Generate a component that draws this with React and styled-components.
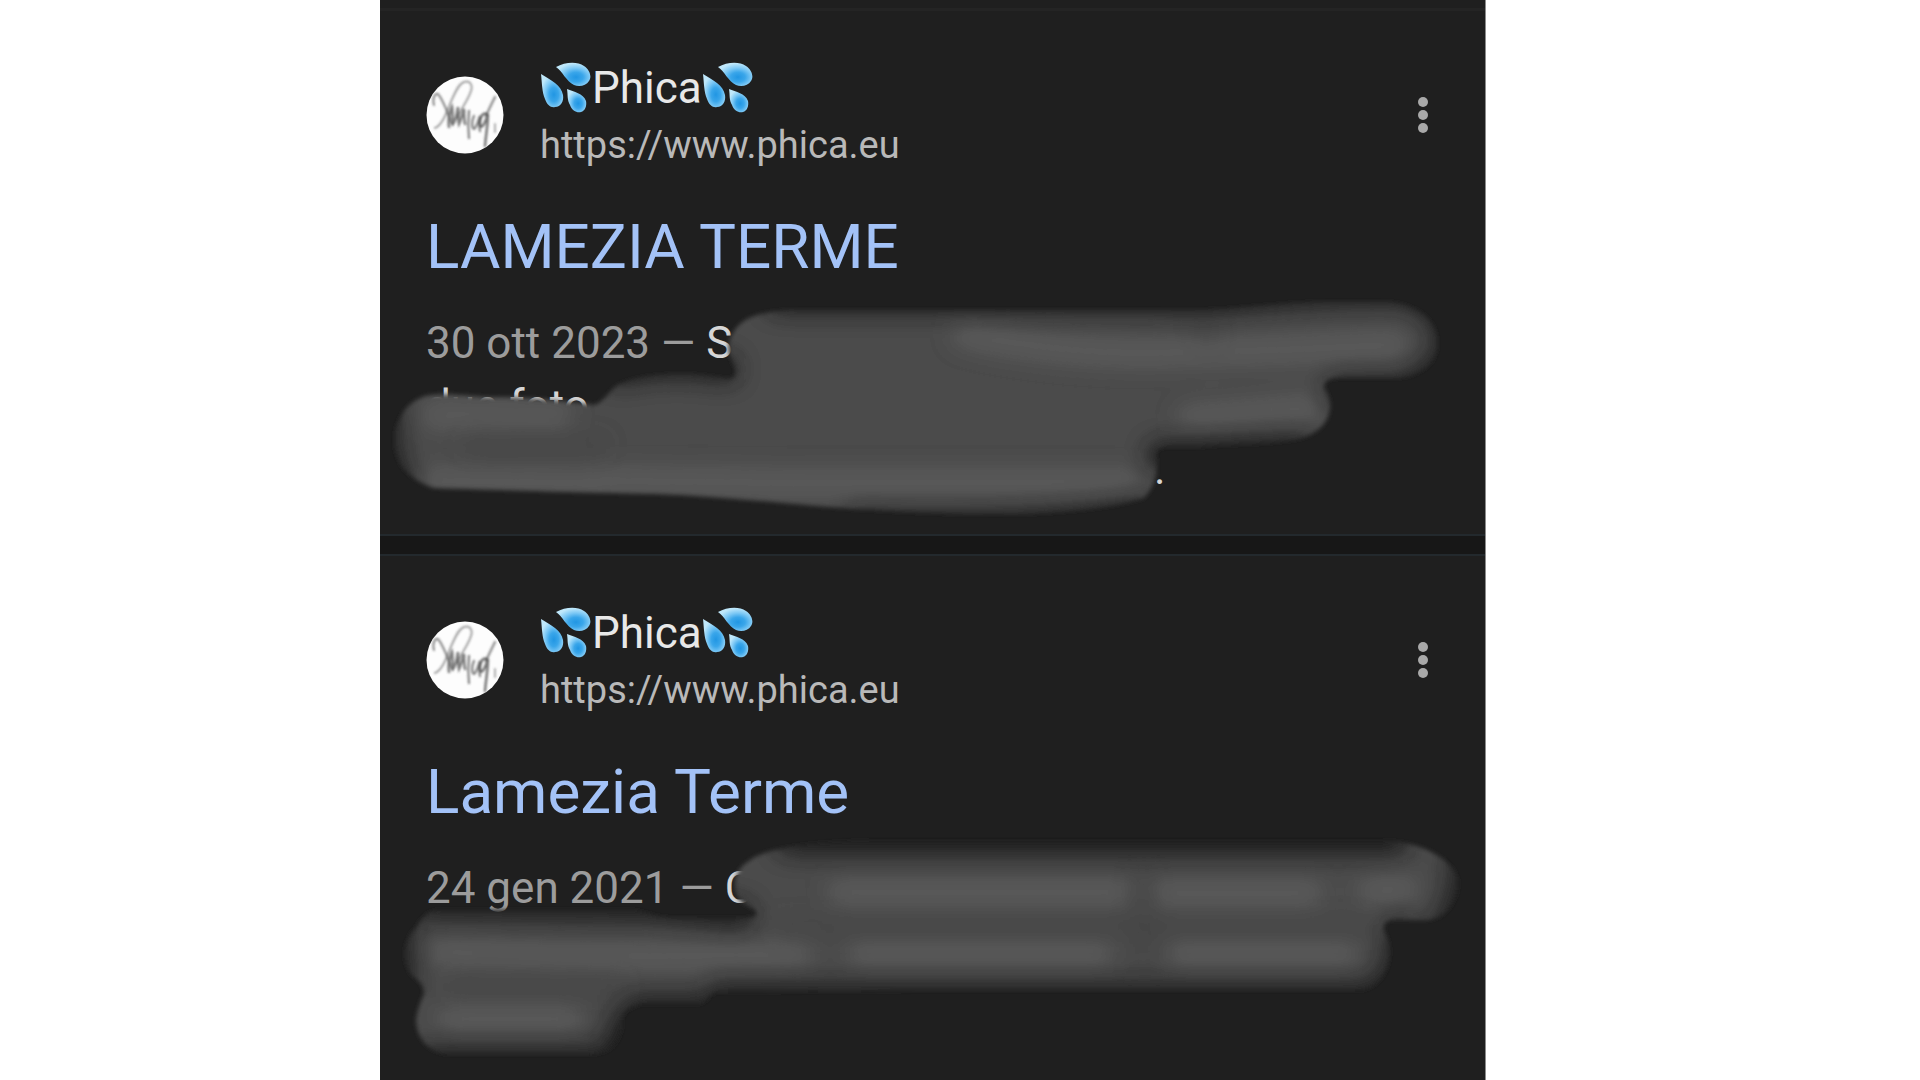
import React from "react";
import styled, { createGlobalStyle } from "styled-components";

const GlobalStyle = createGlobalStyle`
  * {
    box-sizing: border-box;
  }
  body {
    margin: 0;
    background: #ffffff;
    font-family: Roboto, "Liberation Sans", sans-serif;
  }
`;

const Page = styled.div`
  display: grid;
  grid-template-columns: 380fr 1106fr 434fr;
  min-height: 100vh;
`;

const Column = styled.main`
  grid-column: 2;
  background: #1f1f1f;
  border-right: 1px solid #8c8c8c;
`;

const TopEdge = styled.div`
  height: 11px;
  border-bottom: 3px solid #242424;
`;

const Divider = styled.div`
  height: 22px;
  background: #171717;
  border-top: 2px solid #23292d;
  border-bottom: 2px solid #23292d;
`;

const Card = styled.article`
  position: relative;
  height: 523px;
  padding: 45px 40px 0 46px;
`;

const Header = styled.header`
  display: flex;
  align-items: center;
  height: 118px;
`;

const AvatarIcon = styled.svg`
  width: 78px;
  height: 78px;
  flex: none;
`;

const Source = styled.div`
  flex: 1;
  margin-left: 36px;
  padding-top: 2px;
`;

const SiteName = styled.div`
  display: flex;
  align-items: center;
  height: 58px;
  font-size: 44px;
  line-height: 56px;
  color: #e8e8e8;
`;

const SiteUrl = styled.cite`
  display: block;
  font-size: 38px;
  font-style: normal;
  line-height: 56px;
  color: #b9b9b9;
`;

const DropsIcon = styled.svg`
  width: 52px;
  height: 52px;
  flex: none;
`;

const MenuButton = styled.button`
  display: flex;
  align-items: center;
  justify-content: center;
  width: 44px;
  height: 60px;
  padding: 0;
  border: 0;
  background: none;
  color: #a9a9a9;
`;

const Title = styled.h3`
  margin: 33px 0 0;
  font-size: 62px;
  font-weight: 400;
  line-height: 80px;
`;

const TitleLink = styled.a`
  color: #a3c2f7;
  text-decoration: none;
`;

const Snippet = styled.p`
  margin: 25px 0 0;
  font-size: 44px;
  line-height: 63px;
  white-space: nowrap;
  color: #d6d6d6;
`;

const DateText = styled.span`
  color: #9c9c9c;
`;

const Hidden = styled.span`
  display: inline-block;
  width: ${(props) => props.$width}px;
`;

const SmudgeLayer = styled.svg`
  position: absolute;
  top: 0;
  left: 0;
  width: 1105px;
  height: 523px;
  pointer-events: none;
`;

const Avatar = () => (
  <AvatarIcon viewBox="0 0 78 78" aria-hidden="true">
    <defs>
      <filter id="ink">
        <feGaussianBlur stdDeviation="1.2" />
      </filter>
    </defs>
    <circle cx="39" cy="39" r="38.5" fill="#fdfdfd" />
    <g fill="none" stroke="#4a4a4a" strokeLinecap="round" filter="url(#ink)">
      <path d="M8 29c-2-7 1-12 4-11 6 7 9 18 14 30" strokeWidth="2.2" opacity=".6" />
      <path d="M9 52c7-3 11-14 15-24 4-9 8-20 14-22 6-2 9 3 7 9-3 9-9 16-13 26" strokeWidth="2" opacity=".5" />
      <path d="M23 51c-1-7 0-14 3-20 1 5 0 12 1 17 3-4 4-10 5-17 0 7 0 12 1 17 2-4 3-9 5-15 0 6 0 11 1 15" strokeWidth="2.6" opacity=".7" />
      <path d="M43 35c-1 9-1 18 0 27M48 40c-3 6-2 12 0 13 3-2 4-8 6-13 0 7-1 11 0 15" strokeWidth="2.3" opacity=".65" />
      <path d="M61 38c-5-2-8 5-7 12 3 3 6-6 8-12 0 10-2 20-3 32" strokeWidth="2.5" opacity=".75" />
      <path d="M60 40c3-7 6-13 9-19" strokeWidth="2.4" opacity=".6" />
      <path d="M69 48v8" strokeWidth="2" opacity=".45" />
    </g>
  </AvatarIcon>
);

const Drops = () => (
  <DropsIcon viewBox="0 0 52 52" role="img" aria-label="sweat droplets">
    <defs>
      <radialGradient id="drop" cx="58%" cy="62%" r="60%">
        <stop offset="0" stopColor="#2196e3" />
        <stop offset=".35" stopColor="#3aa6ea" />
        <stop offset=".65" stopColor="#7cc8f5" />
        <stop offset="1" stopColor="#bfe8fb" />
      </radialGradient>
    </defs>
    <g fill="url(#drop)">
      <path d="M1 12c1 9 1 18 4 25 2 6 6 9 10 8 6 0 9-6 8-12C21 23 11 18 1 12z" />
      <path d="M16 5c9-5 21-6 28-1 6 4 8 11 5 15-3 5-10 6-15 4-8-4-11-13-18-18z" />
      <path d="M27 27c1 6 0 11 3 16 2 6 7 8 11 7 4-1 6-6 5-11-3-8-12-9-19-12z" />
    </g>
  </DropsIcon>
);

const MoreDots = () => (
  <svg width="12" height="38" viewBox="0 0 12 38" fill="currentColor" aria-hidden="true">
    <circle cx="6" cy="6" r="5" />
    <circle cx="6" cy="19" r="5" />
    <circle cx="6" cy="32" r="5" />
  </svg>
);

const smudgeOne = {
  id: "one",
  viewBox: "380 10 1105 523",
  shape:
    "M729 353Q727 340 733 332C740 320 752 310 799 309H1160C1216 312 1260 303 1327 301H1380C1415 301 1437 318 1437 342C1437 366 1415 377 1390 377H1335Q1323 378 1324 387C1336 402 1332 430 1297 438C1265 444 1225 442 1197 446H1165Q1154 447 1156 456Q1160 480 1144 497C1100 510 1040 513 994 513C930 513 870 509 816 505C760 500 710 495 656 493L566 491L434 487C408 478 395 462 395 440C395 416 410 396 432 394C460 392 475 397 500 396C540 397 560 400 595 404C605 400 610 388 620 383C645 372 690 370 727 378Q738 378 735 367Z",
  edges: [
    "M780 298H1160C1216 304 1260 290 1400 290Q1448 300 1450 345Q1440 377 1400 390H1340",
    "M386 410Q382 460 400 482",
    "M860 524C940 528 1060 526 1140 512",
    "M1160 454L1300 448",
    "M620 370Q670 358 725 368",
  ],
  lights: ["M965 332Q1050 352 1150 352L1280 349L1395 344", "M1190 418L1310 408", "M600 480L800 482H1130", "M430 480L600 482", "M434 414L560 416"],
  darks: ["M470 444H600", "M1200 318L1210 335"],
};

const smudgeTwo = {
  id: "two",
  viewBox: "380 555 1105 523",
  shape:
    "M741 901C730 888 734 868 749 860C765 846 820 841 870 840H1382C1425 840 1458 862 1458 883C1456 907 1440 919 1425 919H1392Q1382 920 1384 930C1396 950 1388 986 1360 989H920L715 991C705 996 708 1003 695 1003H640Q618 1010 622 1025Q618 1053 590 1053H449C425 1051 416 1034 416 1018Q418 1005 424 993Q424 982 414 976C402 965 402 940 416 927Q425 909 441 909H627C645 909 650 916 670 917H740Q762 918 755 909Z",
  edges: [
    "M790 840H1395",
    "M430 904L650 906L740 914",
    "M720 996H1370",
    "M700 1008H640Q614 1025 620 1060",
    "M430 1060H610",
    "M1464 850Q1468 900 1444 930",
    "M1400 930Q1404 975 1376 992",
    "M400 925Q393 950 402 975",
  ],
  lights: [
    "M840 892H1120",
    "M1160 893H1310",
    "M1370 890L1405 888",
    "M440 952L600 956L800 953",
    "M860 952H1100",
    "M1180 952H1345",
    "M450 1018H570",
  ],
  darks: ["M780 926H1370", "M455 984H620", "M1144 875V970"],
};

const Smudge = ({ data }) => (
  <SmudgeLayer viewBox={data.viewBox} aria-hidden="true">
    <defs>
      <filter id={`soft-${data.id}`}>
        <feGaussianBlur stdDeviation="2" />
      </filter>
      <filter id={`haze-${data.id}`} filterUnits="userSpaceOnUse" x="380" y="0" width="1105" height="1080">
        <feGaussianBlur stdDeviation="11" />
      </filter>
      <clipPath id={`clip-${data.id}`}>
        <path d={data.shape} />
      </clipPath>
    </defs>
    <g filter={`url(#soft-${data.id})`}>
      <path d={data.shape} fill="#4b4b4b" />
      <g clipPath={`url(#clip-${data.id})`}>
        <g fill="none" strokeLinecap="round">
          <g stroke="#5b5b5b" strokeWidth="26" filter={`url(#haze-${data.id})`}>
            {data.lights.map((d) => (
              <path key={d} d={d} />
            ))}
          </g>
          <g stroke="#424242" strokeWidth="12" filter={`url(#haze-${data.id})`}>
            {data.darks.map((d) => (
              <path key={d} d={d} />
            ))}
          </g>
          <g stroke="#1f1f1f" strokeWidth="28" filter={`url(#haze-${data.id})`}>
            {data.edges.map((d) => (
              <path key={d} d={d} />
            ))}
          </g>
        </g>
      </g>
    </g>
  </SmudgeLayer>
);

const Result = ({ title, children, smudge }) => (
  <Card>
    <Header>
      <Avatar />
      <Source>
        <SiteName>
          <Drops />
          Phica
          <Drops />
        </SiteName>
        <SiteUrl>https://www.phica.eu</SiteUrl>
      </Source>
      <MenuButton type="button" aria-label="Altre opzioni">
        <MoreDots />
      </MenuButton>
    </Header>
    <Title>
      <TitleLink href="#">{title}</TitleLink>
    </Title>
    <Snippet>{children}</Snippet>
    <Smudge data={smudge} />
  </Card>
);

const App = () => (
  <>
    <GlobalStyle />
    <Page>
      <Column>
        <TopEdge />
        <Result title="LAMEZIA TERME" smudge={smudgeOne}>
          <DateText>30 ott 2023 — </DateText>S
          <br />
          due foto
          <br />
          <Hidden $width={728} />.
        </Result>
        <Divider />
        <Result title="Lamezia Terme" smudge={smudgeTwo}>
          <DateText>24 gen 2021 — </DateText>C
        </Result>
      </Column>
    </Page>
  </>
);

export default App;
